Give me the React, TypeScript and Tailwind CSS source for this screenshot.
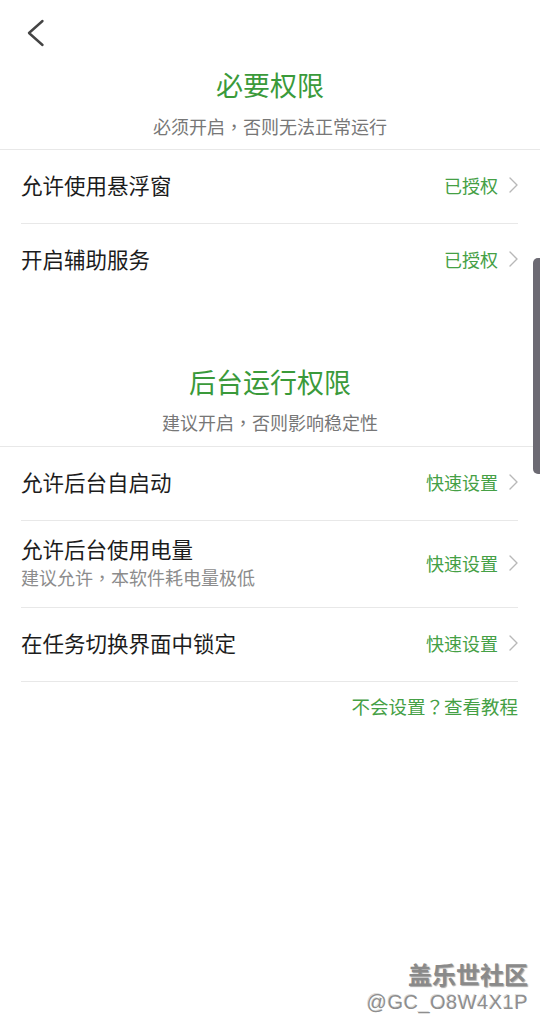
import type { ReactNode } from 'react';

const cjk = 'font-["Noto_Sans_CJK_SC","Noto_Sans",sans-serif]';

// full-width punctuation is centred in its cell on the device, as in the TC font
function P({ text }: { text: string }) {
    return (
        <>
            {text.split(/([，？])/).map((part, i) =>
                part === '，' || part === '？' ? (
                    <span key={i} className='font-["Noto_Sans_CJK_TC",sans-serif]'>{part}</span>
                ) : (
                    part
                ),
            )}
        </>
    );
}

function Chevron() {
    return (
        <svg width="9" height="16" viewBox="0 0 9 16" className="shrink-0">
            <path d="M1 1 L8 8 L1 15" fill="none" stroke="#b8b8b8" strokeWidth="1.4" strokeLinejoin="round" strokeLinecap="round" />
        </svg>
    );
}

interface RowProps {
    title: string;
    desc?: string;
    action: string;
    border?: boolean;
    height: string;
}

function Row({ title, desc, action, border = true, height }: RowProps) {
    return (
        <div className={`flex items-center justify-between pb-[4px] ${height} ${border ? 'border-b border-[#e8e8e8]' : ''}`}>
            <div className="flex flex-col">
                <span className="text-[21.5px] leading-[29px] text-[#1c1c1c]">{title}</span>
                {desc && (
                    <span className="mt-[1px] text-[18px] leading-[26px] text-[#8c8c8c]">
                        <P text={desc} />
                    </span>
                )}
            </div>
            <div className="flex items-center gap-[11px] pt-[1px]">
                <span className="text-[18px] leading-[26px] text-[#45a045]">{action}</span>
                <Chevron />
            </div>
        </div>
    );
}

function SectionHeader({ title, sub, gap, bottom }: { title: string; sub: string; gap: string; bottom: string }): ReactNode {
    return (
        <div className={`border-b border-[#e8e8e8] ${bottom}`}>
            <div className="flex h-[40px] items-center justify-center pb-[2px] text-[27px] text-[#3a9a3a]">{title}</div>
            <div className={`flex h-[26px] items-center justify-center pb-[2px] text-[18px] text-[#777] ${gap}`}>
                <P text={sub} />
            </div>
        </div>
    );
}

export default function App() {
    return (
        <div className={`relative h-[1035px] w-[540px] overflow-hidden bg-white ${cjk}`}>
            <div className="h-[66px] pl-[25px] pt-[19px]">
                <svg width="20" height="28" viewBox="0 0 20 28">
                    <path d="M17.5 2 L4 14 L17.5 26" fill="none" stroke="#444" strokeWidth="2.4" strokeLinecap="round" strokeLinejoin="round" />
                </svg>
            </div>

            <SectionHeader title="必要权限" sub="必须开启，否则无法正常运行" gap="mt-[8px]" bottom="pb-[9px]" />
            <div className="mx-[21px] mr-[22px]">
                <Row title="允许使用悬浮窗" action="已授权" height="h-[74px]" />
                <Row title="开启辅助服务" action="已授权" border={false} height="h-[73px]" />
            </div>

            <div className="mt-[66px]">
                <SectionHeader title="后台运行权限" sub="建议开启，否则影响稳定性" gap="mt-[7px]" bottom="pb-[10px]" />
            </div>
            <div className="mx-[21px] mr-[22px]">
                <Row title="允许后台自启动" action="快速设置" height="h-[74px]" />
                <Row title="允许后台使用电量" desc="建议允许，本软件耗电量极低" action="快速设置" height="h-[87px]" />
                <Row title="在任务切换界面中锁定" action="快速设置" height="h-[74px]" />
                <div className="mt-[13px] flex h-[26px] items-center justify-end pb-[2px] text-[18.5px] text-[#45a045]">
                    <P text="不会设置？查看教程" />
                </div>
            </div>

            <div className="absolute right-0 top-[258px] h-[216px] w-[7px] rounded-l-[5px] bg-[#6c6a73]" />

            <div className="absolute bottom-[20px] right-[12px] flex flex-col items-end">
                <span className="text-[24px] font-bold leading-[30px] text-[#8a8a8a] [text-shadow:1px_1px_1px_rgba(0,0,0,0.35)]">盖乐世社区</span>
                <span className='font-["Liberation_Sans",sans-serif] text-[20px] leading-[26px] tracking-[0.5px] text-[#8e8e8e] [text-shadow:1px_1px_0_rgba(255,255,255,0.9),-1px_-1px_0_rgba(0,0,0,0.15)]'>@GC_O8W4X1P</span>
            </div>
        </div>
    );
}
